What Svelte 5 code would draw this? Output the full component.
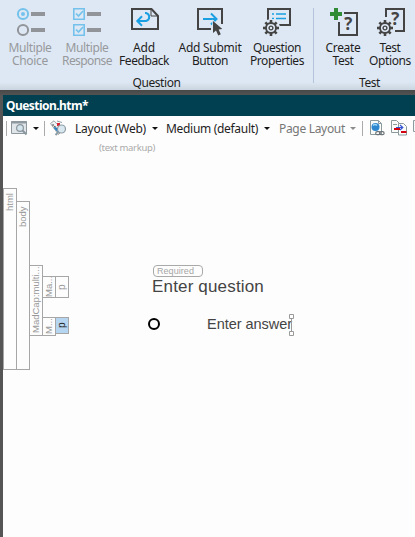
<script>
  const groups = [
    {
      name: 'Question', nameWidth: 48, width: 313, pad: 0,
      items: [
        { icon: 'choice', x: 14, w: 60, lines: [['Multiple', 43], ['Choice', 36]], off: true },
        { icon: 'response', x: 71, w: 54, lines: [['Multiple', 43], ['Response', 50]], off: true },
        { icon: 'feedback', x: 128, w: 60, lines: [['Add', 22], ['Feedback', 50]] },
        { icon: 'submit', x: 194, w: 72, lines: [['Add Submit', 63], ['Button', 36]] },
        { icon: 'properties', x: 261, w: 62, lines: [['Question', 48], ['Properties', 54]] }
      ]
    },
    {
      name: 'Test', nameWidth: 21, width: 111, pad: 8,
      items: [
        { icon: 'create', x: 327, w: 42, lines: [['Create', 35], ['Test', 21]] },
        { icon: 'options', x: 374, w: 52, lines: [['Test', 21], ['Options', 42]] }
      ]
    }
  ];
  const teeth = [0, 45, 90, 135, 180, 225, 270, 315];

  // Spread or tighten the letters so that a label takes the given width.
  function fit(node, width) {
    const natural = node.getBoundingClientRect().width;
    node.style.letterSpacing = (width - natural) / node.textContent.length + 'px';
  }
</script>

{#snippet gear(cx, cy)}
  <g transform="translate({cx} {cy})" stroke="none">
    <circle r="9" fill="#dee8f4" />
    {#each teeth as a}
      <rect x="-1.3" y="-8" width="2.6" height="3.5" fill="#444" transform="rotate({a})" />
    {/each}
    <circle r="5" fill="#dee8f4" stroke="#444" stroke-width="1.9" />
    <circle r="1.9" fill="none" stroke="#444" stroke-width="1.4" />
  </g>
{/snippet}

{#snippet caret(off)}
  <svg class="caret" width="6" height="3" viewBox="0 0 6 3"><path d="M0 0H6L3 3Z" fill={off ? '#8b8b8b' : '#111'} /></svg>
{/snippet}

<div class="app">
  <div class="ribbon">
    {#each groups as g, i}
      {#if i}<div class="divider"></div>{/if}
      <section class="group" style:width="{g.width}px">
        <div class="items" style:padding-left="{g.pad}px">
          {#each g.items as it}
            <div class="item" class:off={it.off} style:width="{it.w}px">
              <svg width="32" height="32" viewBox="{it.x} 6 32 32" fill="none" stroke="#444" stroke-width="2">
                {#if it.icon === 'choice'}
                  <circle cx="23" cy="14" r="5.1" stroke="#74c2eb" />
                  <circle cx="23" cy="14" r="2" fill="#74c2eb" stroke="none" />
                  <circle cx="23" cy="30" r="5.1" stroke="#919498" />
                  <path d="M31 14H45M31 30H45" stroke="#919498" stroke-width="4" />
                {:else if it.icon === 'response'}
                  <path d="M73.8 8.8H84.2V19.2H73.8ZM73.8 24.8H84.2V35.2H73.8Z" stroke="#74c2eb" stroke-width="1.6" />
                  <path d="M76 13.5L78.5 16L83 11M76 29.5L78.5 32L83 27" stroke="#74c2eb" stroke-width="1.7" />
                  <path d="M87 14H101M87 30H101" stroke="#919498" stroke-width="4" />
                {:else if it.icon === 'feedback'}
                  <path d="M132 9H151.500L158 16V29H132Z" />
                  <path d="M151 9V16H158" stroke-width="1" />
                  <path d="M137.500 21H146A4.100 4.100 0 0 0 146 13H145M142 16.300L137.300 21L142 25.700" stroke="#1a9fe2" stroke-width="2" />
                {:else if it.icon === 'submit'}
                  <path d="M211 29H198V9H222V24" />
                  <path d="M203 19H216M211 13.500L216.500 19L211 24.500" stroke="#1a9fe2" stroke-width="2" />
                  <path d="M213 21V33L216 30.500L218.300 35.500L220.800 34.300L218.600 29.600L222.300 29Z" fill="#444" stroke="#dee8f4" stroke-width="1.400" paint-order="stroke" />
                {:else if it.icon === 'properties'}
                  <path d="M268 20V9H290V25H279" />
                  <path d="M272 14H274M276 14H286M272 18.500H274M276 18.500H286" stroke="#1a9fe2" stroke-width="1.500" />
                  {@render gear(271, 28)}
                {:else if it.icon === 'create'}
                  <path d="M336 8V20M330 14H342" stroke="#308b35" stroke-width="4" />
                  <path d="M344 13H357V35H339V22" />
                  <text class="mark" x="348.200" y="30">?</text>
                {:else}
                  <path d="M386 17V9H404V31H395" />
                  {@render gear(385, 28)}
                  <text class="mark" x="395.300" y="25">?</text>
                {/if}
              </svg>
              {#each it.lines as [t, w]}
                <div class="line"><span use:fit={w}>{t}</span></div>
              {/each}
            </div>
          {/each}
        </div>
        <div class="name"><span use:fit={g.nameWidth}>{g.name}</span></div>
      </section>
    {/each}
  </div>

  <div class="workspace">
    <div class="tab"><span use:fit={82}>Question.htm*</span></div>
    <div class="toolbar">
      <i class="sep" style:margin-left="3px"></i>
      <svg style:margin-left="4px" width="17" height="16" viewBox="0 0 17 16">
        <path d="M.5 1.500H15.500V13.500H.5Z" fill="#dfe5e9" stroke="#8d989f" />
        <path d="M0 2.500H16" stroke="#8d989f" stroke-width="2" />
        <circle cx="9" cy="8" r="3.400" fill="#d5e5ed" stroke="#8a969d" stroke-width="1.200" />
        <path d="M11.500 10.500L15.500 14.500" stroke="#8a969d" stroke-width="2" />
      </svg>
      <span class="gap" style:width="5px"></span>{@render caret(false)}
      <i class="sep" style:margin-left="5px"></i>
      <svg style:margin-left="5px" width="17" height="16" viewBox="0 0 17 16">
        <path d="M.5 3.500L4 .8L13 10L8.500 14.500Z" fill="#eef2f4" stroke="#9aa5aa" />
        <path d="M2.500 4.500L8 10" stroke="#555" stroke-width="1.500" stroke-dasharray="1.500 1" />
        <path d="M4.500 7.500L9 12" stroke="#2f83c3" stroke-width="2" />
        <path d="M7 3H10V6H7Z" fill="#d92231" />
        <path d="M7 1L12 2.500" stroke="#8fa0a6" />
        <circle cx="11.500" cy="9" r="4" fill="#d9e8f0" stroke="#8d9ba3" stroke-width="1.200" />
        <path d="M8.500 12L5.500 15" stroke="#8d9ba3" stroke-width="2" />
      </svg>
      <span class="gap" style:width="8px"></span>
      <span class="field" style:width="77px"><span use:fit={71}>Layout (Web)</span></span>{@render caret(false)}
      <span class="field" style:width="98px" style:padding-left="8px"><span use:fit={92}>Medium (default)</span></span>{@render caret(false)}
      <span class="field off" style:width="71px" style:padding-left="9px"><span use:fit={66}>Page Layout</span></span>{@render caret(true)}
      <i class="sep" style:margin-left="6px"></i>
      <svg style:margin-left="7px" width="15" height="16" viewBox="0 0 15 16">
        <path d="M.5 .5H8.500L11.500 3.500V14.500H.5Z" fill="#fafcfc" stroke="#8c9a9c" />
        <path d="M8.500 .5V3.500H11.500" fill="none" stroke="#8c9a9c" />
        <circle cx="5.500" cy="7" r="4" fill="#2d87ce" />
        <path d="M3 5.500Q5 3.500 7 5.500" stroke="#9ed6f6" stroke-width="1.500" fill="none" />
        <rect x="5.700" y="11.700" width="4.600" height="3" rx="1.500" fill="#fff" stroke="#6d7477" stroke-width="1.200" />
        <rect x="9.500" y="11.700" width="4.600" height="3" rx="1.500" fill="none" stroke="#6d7477" stroke-width="1.200" />
      </svg>
      <svg style:margin-left="6px" width="17" height="16" viewBox="0 0 17 16">
        <path d="M.5 .5H5.500L8.500 3.500V12.500H.5Z" fill="#fafcfc" stroke="#8c9a9c" />
        <path d="M2 4.500H6" stroke="#8c9a9c" />
        <path d="M7.500 3.500H12.500L15.500 6.500V15H7.500Z" fill="#fafcfc" stroke="#8c9a9c" />
        <path d="M5 7.500H11.500M9 5L11.800 7.500L9 10" fill="none" stroke="#3454d1" stroke-width="1.200" />
        <path d="M3 9H9M10 12H15.500" stroke="#d3000f" stroke-width="2" />
      </svg>
      <svg style:margin-left="5px" width="3" height="16" viewBox="0 0 3 16"><path d="M.5 .5H3V11.500H.5Z" fill="#f5f8f8" stroke="#8c9a9c" /></svg>
    </div>

    <div class="document">
      <div class="tags">
        <div class="tag outer" style:height="182px">html</div>
        <div class="tag outer" style:height="169px" style:margin-top="13px">body</div>
        <div class="tag" style:height="71px" style:margin-top="77px">MadCap:multi...</div>
        <div class="rows">
          <div class="row">
            <div class="tag" style:height="22px">Ma...</div>
            <div class="tag p" style:height="22px">p</div>
          </div>
          <div class="row">
            <div class="tag" style:height="19px">M...</div>
            <div class="tag p on" style:height="17px">p</div>
          </div>
        </div>
      </div>
      <div class="content">
        <div class="markup"><span use:fit={56}>(text markup)</span></div>
        <div class="required"><span use:fit={37}>Required</span></div>
        <div class="question"><span use:fit={112}>Enter question</span></div>
        <div class="answer">
          <span class="radio"></span>
          <span class="reply"><span use:fit={85}>Enter answer</span></span>
          <svg class="cursor" width="5" height="22" viewBox="0 0 5 22" fill="#fdfdfd" stroke="#999">
            <path d="M2.500 4V18" /><path d="M.5 .5H4.500V4.500H.5ZM.5 17.500H4.500V21.500H.5Z" />
          </svg>
        </div>
      </div>
    </div>
  </div>
</div>

<style>
  .app {
    width: 415px; height: 537px; overflow: hidden;
    background: linear-gradient(#484848, #555 6px) 0 90px no-repeat, #555;
    font: 12px/13px "Noto Sans", "Open Sans", sans-serif;
    color: #1e1e1e; white-space: nowrap;
    display: flex; flex-direction: column;
  }
  svg { display: block; flex: none; }
  .ribbon {
    height: 90px; flex: none; display: flex; box-sizing: border-box;
    background: linear-gradient(#dee8f4 82px, #cbd5df 90px);
  }
  .divider { width: 1px; height: 75px; margin-top: 8px; flex: none; background: #b3c4da; }
  .group { flex: none; padding-top: 6px; box-sizing: border-box; }
  .items { display: flex; height: 70px; }
  .item { display: flex; flex-direction: column; align-items: center; flex: none; }
  .item svg { margin-bottom: 3px; }
  .line { height: 13px; }
  .line span { display: block; height: 13px; }
  .item.off { color: #97999c; }
  .name { text-align: center; }
  .mark { font: bold 17px "Open Sans", sans-serif; fill: #444; stroke: none; text-anchor: middle; }

  .workspace { margin: 5px 0 0 3px; flex: 1; background: #fdfdfd; display: flex; flex-direction: column; }
  .tab {
    height: 21px; flex: none; background: #004050; color: #fff;
    font-weight: 700; line-height: 22px; padding-left: 3px;
  }
  .toolbar { height: 24px; flex: none; display: flex; align-items: center; }
  .sep { width: 1px; height: 15px; background: #aaa; flex: none; }
  .gap { flex: none; }
  .field { flex: none; }
  .field.off { color: #777; }

  .document { flex: 1; display: flex; }
  .tags { display: flex; align-items: flex-start; padding-top: 48px; width: 96px; flex: none; }
  .tag {
    width: 14px; box-sizing: border-box; flex: none; border: 1px solid #a6a6a6;
    writing-mode: vertical-rl; transform: rotate(180deg);
    text-align: right; line-height: 12px; color: #999; overflow: hidden;
    font-family: "Liberation Sans", Arial, sans-serif; font-size: 9.5px;
  }
  .tag.outer { padding-bottom: 4px; }
  .tag + .tag, .rows { margin-left: -1px; }
  .rows { margin-top: 88px; display: flex; flex-direction: column; gap: 19px; }
  .row { display: flex; align-items: flex-start; }
  .tag.p { text-align: center; font-size: 10px; }
  .p.on { background: #b5d5f1; color: #222; }

  .content { flex: 1; font-family: "Liberation Sans", Arial, sans-serif; color: #444; }
  .markup { font: 9.5px/12px "Noto Sans", sans-serif; color: #aaa; padding-top: 2px; }
  .required {
    margin: 111px 0 0 54px; width: 50px; height: 12px; box-sizing: border-box;
    border: 1px solid #a9a9a9; border-radius: 4px;
    font-size: 9px; line-height: 11px; color: #a6a6a6; padding-left: 3px;
  }
  .question { font-size: 17px; line-height: 20px; padding-left: 53px; }
  .answer { display: flex; align-items: center; margin-top: 17px; padding-left: 49px; height: 20px; }
  .radio { width: 12px; height: 12px; border: 2px solid #000; border-radius: 50%; box-sizing: border-box; }
  .reply { width: 82px; margin-left: 47px; font-size: 14.5px; line-height: 20px; }
  .cursor { margin-top: 2px; }
</style>
